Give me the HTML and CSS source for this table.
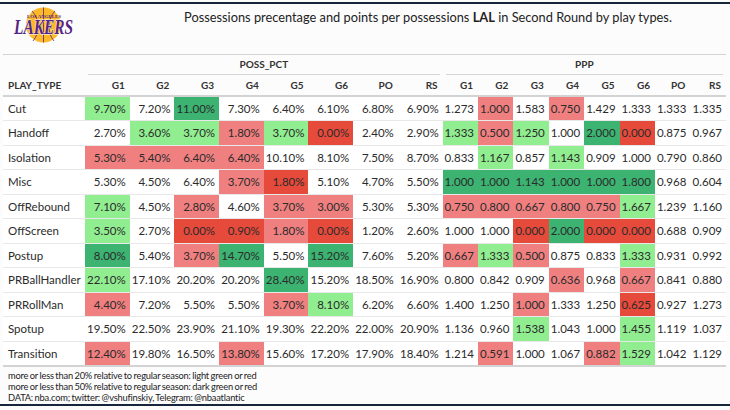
FILE: index.html
```html
<!DOCTYPE html>
<html lang="en">
<head>
<meta charset="utf-8">
<title>LAL play types</title>
<link rel="stylesheet" href="styles.css">
</head>
<body>
<div class="page">
  <div class="header">
    <div class="logo">
      <svg width="76" height="40" viewBox="0 0 76 40">
        <circle cx="36.5" cy="19" r="17.5" fill="#FDB927"/>
        <path d="M25 5 C33 13 33 27 26 35" fill="none" stroke="#552583" stroke-width="0.8"/>
        <path d="M48 5 C40 13 40 27 47 35" fill="none" stroke="#552583" stroke-width="0.8"/>
        <path d="M36.5 1.5 L36.5 36.5" fill="none" stroke="#552583" stroke-width="0.8"/>
        <text x="20" y="11.5" class="logo-small" textLength="34" lengthAdjust="spacingAndGlyphs">LOS ANGELES</text>
        <text x="7" y="28" class="logo-big" textLength="59" lengthAdjust="spacingAndGlyphs">LAKERS</text>
      </svg>
    </div>
    <div class="title">Possessions precentage and points per possessions <b>LAL</b> in Second Round by play types.</div>
  </div>

  <table class="stats">
    <colgroup>
      <col class="c-label">
      <col class="c-pct"><col class="c-pct"><col class="c-pct"><col class="c-pct">
      <col class="c-pct"><col class="c-pct"><col class="c-pct"><col class="c-pct">
      <col class="c-ppp"><col class="c-ppp"><col class="c-ppp"><col class="c-ppp">
      <col class="c-ppp"><col class="c-ppp"><col class="c-ppp"><col class="c-ppp">
    </colgroup>
    <thead>
      <tr class="spanners">
        <th></th>
        <th colspan="8"><div class="spanner">POSS_PCT</div></th>
        <th colspan="8"><div class="spanner">PPP</div></th>
      </tr>
      <tr class="labels">
        <th class="lbl">PLAY_TYPE</th>
        <th>G1</th><th>G2</th><th>G3</th><th>G4</th><th>G5</th><th>G6</th><th>PO</th><th>RS</th>
        <th>G1</th><th>G2</th><th>G3</th><th>G4</th><th>G5</th><th>G6</th><th>PO</th><th>RS</th>
      </tr>
    </thead>
    <tbody>
      <tr><td class="lbl">Cut</td>
        <td class="lg">9.70%</td><td>7.20%</td><td class="dg">11.00%</td><td>7.30%</td><td>6.40%</td><td>6.10%</td><td>6.80%</td><td>6.90%</td>
        <td>1.273</td><td class="lr">1.000</td><td>1.583</td><td class="lr">0.750</td><td>1.429</td><td>1.333</td><td>1.333</td><td>1.335</td></tr>
      <tr><td class="lbl">Handoff</td>
        <td>2.70%</td><td class="lg">3.60%</td><td class="lg">3.70%</td><td class="lr">1.80%</td><td class="lg">3.70%</td><td class="dr">0.00%</td><td>2.40%</td><td>2.90%</td>
        <td class="lg">1.333</td><td class="lr">0.500</td><td class="lg">1.250</td><td>1.000</td><td class="dg">2.000</td><td class="dr">0.000</td><td>0.875</td><td>0.967</td></tr>
      <tr><td class="lbl">Isolation</td>
        <td class="lr">5.30%</td><td class="lr">5.40%</td><td class="lr">6.40%</td><td class="lr">6.40%</td><td>10.10%</td><td>8.10%</td><td>7.50%</td><td>8.70%</td>
        <td>0.833</td><td class="lg">1.167</td><td>0.857</td><td class="lg">1.143</td><td>0.909</td><td>1.000</td><td>0.790</td><td>0.860</td></tr>
      <tr><td class="lbl">Misc</td>
        <td>5.30%</td><td>4.50%</td><td>6.40%</td><td class="lr">3.70%</td><td class="dr">1.80%</td><td>5.10%</td><td>4.70%</td><td>5.50%</td>
        <td class="dg">1.000</td><td class="dg">1.000</td><td class="dg">1.143</td><td class="dg">1.000</td><td class="dg">1.000</td><td class="dg">1.800</td><td>0.968</td><td>0.604</td></tr>
      <tr><td class="lbl">OffRebound</td>
        <td class="lg">7.10%</td><td>4.50%</td><td class="lr">2.80%</td><td>4.60%</td><td class="lr">3.70%</td><td class="lr">3.00%</td><td>5.30%</td><td>5.30%</td>
        <td class="lr">0.750</td><td class="lr">0.800</td><td class="lr">0.667</td><td class="lr">0.800</td><td class="lr">0.750</td><td class="lg">1.667</td><td>1.239</td><td>1.160</td></tr>
      <tr><td class="lbl">OffScreen</td>
        <td class="lg">3.50%</td><td>2.70%</td><td class="dr">0.00%</td><td class="dr">0.90%</td><td class="lr">1.80%</td><td class="dr">0.00%</td><td>1.20%</td><td>2.60%</td>
        <td>1.000</td><td>1.000</td><td class="dr">0.000</td><td class="dg">2.000</td><td class="dr">0.000</td><td class="dr">0.000</td><td>0.688</td><td>0.909</td></tr>
      <tr><td class="lbl">Postup</td>
        <td class="dg">8.00%</td><td>5.40%</td><td class="lr">3.70%</td><td class="dg">14.70%</td><td>5.50%</td><td class="dg">15.20%</td><td>7.60%</td><td>5.20%</td>
        <td class="lr">0.667</td><td class="lg">1.333</td><td class="lr">0.500</td><td>0.875</td><td>0.833</td><td class="lg">1.333</td><td>0.931</td><td>0.992</td></tr>
      <tr><td class="lbl">PRBallHandler</td>
        <td class="lg">22.10%</td><td>17.10%</td><td>20.20%</td><td>20.20%</td><td class="dg">28.40%</td><td>15.20%</td><td>18.50%</td><td>16.90%</td>
        <td>0.800</td><td>0.842</td><td>0.909</td><td class="lr">0.636</td><td>0.968</td><td class="lr">0.667</td><td>0.841</td><td>0.880</td></tr>
      <tr><td class="lbl">PRRollMan</td>
        <td class="lr">4.40%</td><td>7.20%</td><td>5.50%</td><td>5.50%</td><td class="lr">3.70%</td><td class="lg">8.10%</td><td>6.20%</td><td>6.60%</td>
        <td>1.400</td><td>1.250</td><td class="lr">1.000</td><td>1.333</td><td>1.250</td><td class="dr">0.625</td><td>0.927</td><td>1.273</td></tr>
      <tr><td class="lbl">Spotup</td>
        <td>19.50%</td><td>22.50%</td><td>23.90%</td><td>21.10%</td><td>19.30%</td><td>22.20%</td><td>22.00%</td><td>20.90%</td>
        <td>1.136</td><td>0.960</td><td class="lg">1.538</td><td>1.043</td><td>1.000</td><td class="lg">1.455</td><td>1.119</td><td>1.037</td></tr>
      <tr><td class="lbl">Transition</td>
        <td class="lr">12.40%</td><td>19.80%</td><td>16.50%</td><td class="lr">13.80%</td><td>15.60%</td><td>17.20%</td><td>17.90%</td><td>18.40%</td>
        <td>1.214</td><td class="lr">0.591</td><td>1.000</td><td>1.067</td><td class="lr">0.882</td><td class="lg">1.529</td><td>1.042</td><td>1.129</td></tr>
    </tbody>
  </table>

  <div class="notes">
    <div>more or less than 20% relative to regular season: light green or red</div>
    <div>more or less than 50% relative to regular season: dark green or red</div>
    <div>DATA: nba.com; twitter: @vshufinskiy, Telegram: @nbaatlantic</div>
  </div>
</div>
</body>
</html>
```
FILE: styles.css
```css
* { box-sizing: border-box; }
html, body { margin: 0; padding: 0; }
body {
  background: #fcfcfc;
  font-family: Lato, "Open Sans", sans-serif;
  color: #333;
  width: 730px;
  height: 410px;
  overflow: hidden;
}
.page {
  margin-top: 2px;
  border-top: 2px solid #17263a;
  border-bottom: 2px solid #17263a;
  height: 404px;
  display: flex;
  flex-direction: column;
}
.header {
  display: flex;
  height: 50px;
}
.logo {
  width: 126px;
  padding: 2px 0 0 7px;
}
.logo svg { display: block; overflow: visible; }
.logo-big {
  font-family: "Liberation Serif", serif;
  font-style: italic;
  font-weight: bold;
  font-size: 20px;
  fill: #552583;
  stroke: #ffffff;
  stroke-width: 0.8;
  paint-order: stroke;
}
.logo-small {
  font-family: "Liberation Serif", serif;
  font-weight: bold;
  font-size: 4.5px;
  fill: #552583;
}
.title {
  flex: 1;
  text-align: center;
  font-size: 12.8px;
  padding-top: 5px;
  color: #222;
}
.title b { font-weight: 700; }

.stats {
  margin-left: 3px;
  width: 723px;
  table-layout: fixed;
  border-collapse: collapse;
  border-top: 1px solid #d3d3d3;
  border-bottom: 2px solid #d3d3d3;
}
.c-label { width: 82px; }
.c-pct { width: 44.7px; }
.c-ppp { width: 35.4px; }

.stats th {
  font-size: 10px;
  font-weight: 700;
  color: #333;
  padding: 0;
}
.spanners th { height: 20px; vertical-align: bottom; }
.spanner {
  margin: 0 3px;
  height: 20px;
  line-height: 18px;
  text-align: center;
  border-bottom: 1px solid #d6d6d6;
}
.labels th {
  height: 21px;
  text-align: right;
  padding-right: 5px;
  border-bottom: 2px solid #d3d3d3;
}
.labels th.lbl { text-align: left; padding-left: 5px; }

.stats td {
  height: 24.5px;
  padding: 0 4px 0 0;
  text-align: right;
  font-size: 11.5px;
  color: #2b2b2b;
  white-space: nowrap;
  border-top: 1px solid #e8e8e8;
  background: #ffffff;
}
.stats td.lbl {
  text-align: left;
  padding: 0 0 0 5px;
  font-size: 11.5px;
}
.stats td.lg { background: #90ee90; }
.stats td.dg { background: #3cb371; }
.stats td.lr { background: #f08080; }
.stats td.dr { background: #e64a3b; }

.notes {
  padding: 3px 0 0 8px;
  font-size: 9.3px;
  line-height: 11px;
  letter-spacing: -0.2px;
  word-spacing: -0.6px;
  color: #222;
}
```
